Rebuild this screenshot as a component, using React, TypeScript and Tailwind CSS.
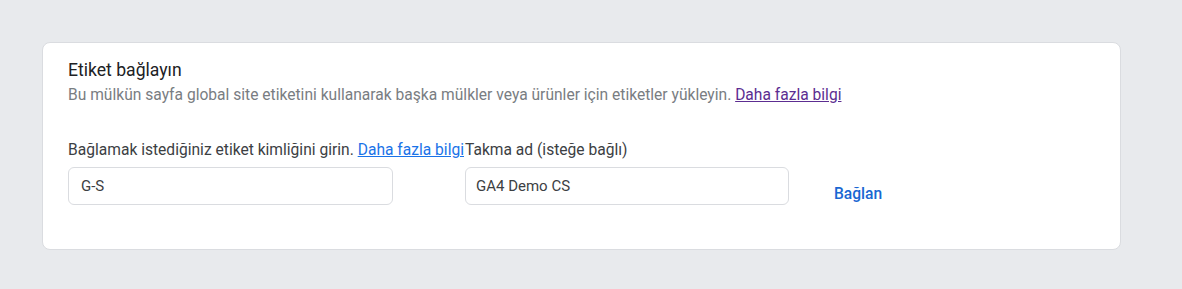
export default function App() {
  return (
    <div
      className="min-h-[289px] w-full bg-[#e8eaed] pt-[42px] pl-[42px] pr-[62px] pb-[40px]"
      style={{ fontFamily: "Roboto, 'Liberation Sans', sans-serif" }}
    >
      <div className="w-[1079px] rounded-lg border border-[#dadce0] bg-white pt-[15px] pb-[44px] pl-[25px]">
        {/* Header */}
        <h2 className="text-[17.6px] leading-6 text-[#202124]">Etiket bağlayın</h2>
        <p className="mt-[3px] whitespace-nowrap text-[15.6px] leading-5 text-[#797d82]">
          Bu mülkün sayfa global site etiketini kullanarak başka mülkler veya ürünler için etiketler yükleyin.{" "}
          <a href="#" className="text-[#5c2d91] underline">
            Daha fazla bilgi
          </a>
        </p>

        {/* Form row */}
        <div className="mt-[35px] flex items-start">
          <div className="flex w-[397px] flex-col">
            <label className="whitespace-nowrap text-[15.6px] leading-5 text-[#3c4043]">
              Bağlamak istediğiniz etiket kimliğini girin.{" "}
              <a href="#" className="text-[#1a73e8] underline">
                Daha fazla bilgi
              </a>
            </label>
            <input
              defaultValue="G-S"
              className="mt-[7px] h-[38px] w-[325px] rounded-md border border-[#dadce0] px-3 text-[15px] text-[#3c4043] outline-none"
            />
          </div>
          <div className="flex flex-col">
            <label className="whitespace-nowrap text-[15.6px] leading-5 text-[#3c4043]">
              Takma ad (isteğe bağlı)
            </label>
            <input
              defaultValue="GA4 Demo CS"
              className="mt-[7px] h-[38px] w-[324px] rounded-md border border-[#dadce0] px-[10px] text-[15px] text-[#3c4043] outline-none"
            />
          </div>
          <button className="mt-[44px] ml-[45px] h-5 text-[15.6px] leading-5 font-medium text-[#1967d2]">
            Bağlan
          </button>
        </div>
      </div>
    </div>
  );
}
